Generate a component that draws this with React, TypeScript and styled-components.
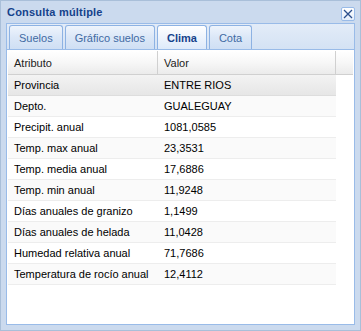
import React from 'react';
import styled, {createGlobalStyle} from 'styled-components';

const GlobalStyle = createGlobalStyle`
  html, body {
    margin: 0;
    padding: 0;
  }
  body {
    font-family: "Liberation Sans", Arial, sans-serif;
    font-size: 11px;
    background: #cddbec;
  }
`;

const Win = styled.div`
  width: 361px;
  height: 331px;
  box-sizing: border-box;
  display: flex;
  flex-direction: column;
  background: #cbdaee;
  border: 1px solid #a9bfd9;
  padding: 0 5px 5px 5px;
`;

const TitleBar = styled.div`
  height: 22px;
  display: flex;
  align-items: center;
  justify-content: space-between;
  padding-left: 1px;
`;

const Title = styled.span`
  font-weight: bold;
  color: #15428b;
  font-size: 11px;
  letter-spacing: 0.2px;
`;

const CloseBtn = styled.button`
  width: 14px;
  height: 14px;
  padding: 0;
  margin-top: 4px;
  border: 1px solid #99bbe8;
  border-radius: 2px;
  background: linear-gradient(#ffffff, #e4eefb);
  display: flex;
  align-items: center;
  justify-content: center;
`;

const TabStrip = styled.div`
  height: 26px;
  box-sizing: border-box;
  display: flex;
  align-items: flex-end;
  gap: 2px;
  padding-left: 2px;
  border: 1px solid #99bbe8;
  border-bottom: none;
  background: linear-gradient(#e3ecf8, #d4e2f4);
`;

const Tab = styled.div<{$active?: boolean}>`
  height: 24px;
  box-sizing: border-box;
  padding: 0 9px;
  display: flex;
  align-items: center;
  border: 1px solid #8db2e3;
  border-bottom: none;
  border-radius: 3px 3px 0 0;
  color: ${p => (p.$active ? '#15428b' : '#416aa3')};
  font-weight: ${p => (p.$active ? 'bold' : 'normal')};
  background: ${p =>
    p.$active
      ? 'linear-gradient(#ffffff, #f1f6fd 40%, #deeafa)'
      : 'linear-gradient(#eef4fc, #dbe7f7 50%, #cfdff4)'};
`;

const Body = styled.div`
  flex: 1;
  background: #fff;
  border: 1px solid #99bbe8;
  padding: 1px;
`;

const HeadRow = styled.div`
  display: grid;
  grid-template-columns: 150px 178px 1fr;
  height: 23px;
  border-bottom: 1px solid #d0d0d0;
  background: linear-gradient(#ffffff, #f7f7f7 50%, #ebebeb);
`;

const HeadCell = styled.div`
  display: flex;
  align-items: center;
  padding-left: 6px;
  color: #222;
  border-right: 1px solid #d0d0d0;
  &:last-child {
    border-right: none;
  }
`;

const Row = styled.div<{$alt?: boolean; $over?: boolean}>`
  width: 328px;
  display: grid;
  grid-template-columns: 150px 178px;
  height: 20px;
  border-bottom: 1px solid ${p => (p.$over ? '#dddddd' : '#ededed')};
  background: ${p =>
    p.$over ? 'linear-gradient(#f3f3f3, #e6e6e6)' : p.$alt ? '#fafafa' : '#ffffff'};
`;

const Cell = styled.div`
  display: flex;
  align-items: center;
  padding-left: 6px;
  color: #000;
  white-space: nowrap;
`;

const data: [string, string][] = [
  ['Provincia', 'ENTRE RIOS'],
  ['Depto.', 'GUALEGUAY'],
  ['Precipit. anual', '1081,0585'],
  ['Temp. max anual', '23,3531'],
  ['Temp. media anual', '17,6886'],
  ['Temp. min anual', '11,9248'],
  ['Días anuales de granizo', '1,1499'],
  ['Días anuales de helada', '11,0428'],
  ['Humedad relativa anual', '71,7686'],
  ['Temperatura de rocío anual', '12,4112'],
];

export default function App() {
  return (
    <>
      <GlobalStyle />
      <Win>
        <TitleBar>
          <Title>Consulta múltiple</Title>
          <CloseBtn>
            <svg width="10" height="10" viewBox="0 0 10 10">
              <path d="M1 1L9 9M9 1L1 9" stroke="#2c4f8c" strokeWidth="1.3" />
            </svg>
          </CloseBtn>
        </TitleBar>
        <TabStrip>
          <Tab>Suelos</Tab>
          <Tab>Gráfico suelos</Tab>
          <Tab $active>Clima</Tab>
          <Tab>Cota</Tab>
        </TabStrip>
        <Body>
          <HeadRow>
            <HeadCell>Atributo</HeadCell>
            <HeadCell>Valor</HeadCell>
            <HeadCell />
          </HeadRow>
          {data.map(([k, v], i) => (
            <Row key={k} $alt={i % 2 === 1} $over={i === 0}>
              <Cell>{k}</Cell>
              <Cell>{v}</Cell>
            </Row>
          ))}
        </Body>
      </Win>
    </>
  );
}
